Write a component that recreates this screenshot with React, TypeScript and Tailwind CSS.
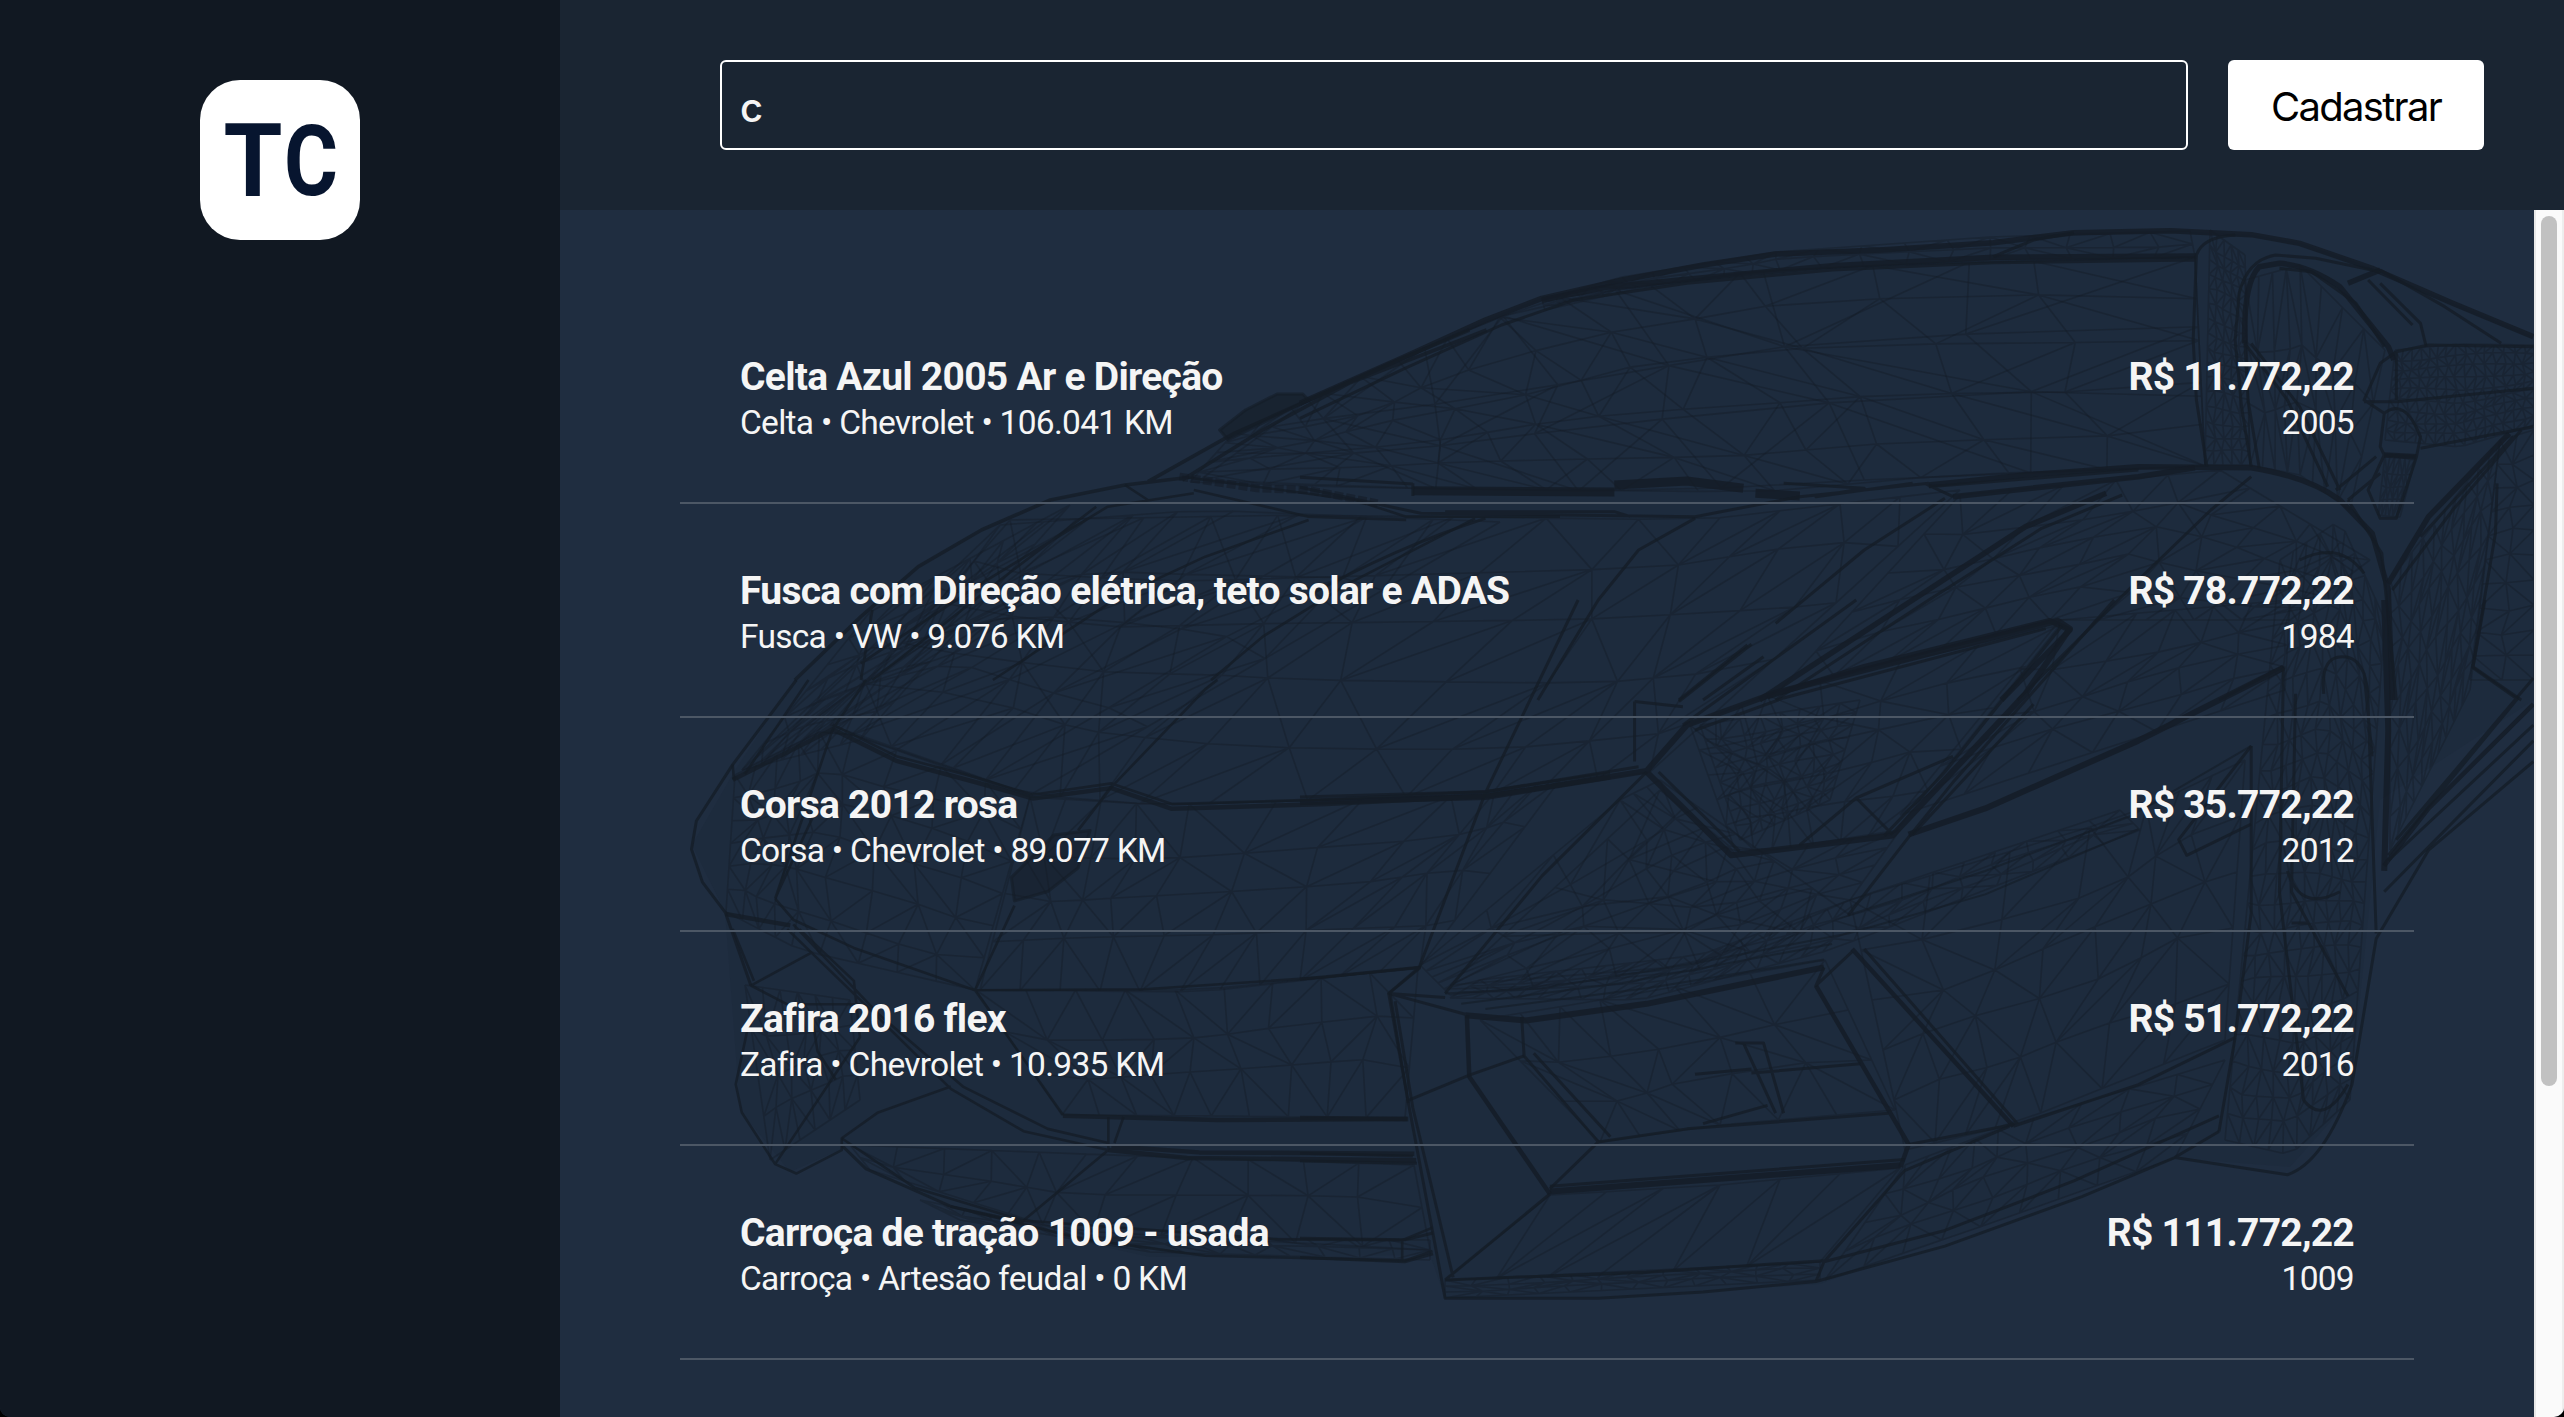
type Point = [number, number];

interface Car {
  title: string;
  model: string;
  brand: string;
  km: string;
  price: string;
  year: string;
}

const cars: Car[] = [
  { title: "Celta Azul 2005 Ar e Direção", model: "Celta", brand: "Chevrolet", km: "106.041", price: "R$ 11.772,22", year: "2005" },
  { title: "Fusca com Direção elétrica, teto solar e ADAS", model: "Fusca", brand: "VW", km: "9.076", price: "R$ 78.772,22", year: "1984" },
  { title: "Corsa 2012 rosa", model: "Corsa", brand: "Chevrolet", km: "89.077", price: "R$ 35.772,22", year: "2012" },
  { title: "Zafira 2016 flex", model: "Zafira", brand: "Chevrolet", km: "10.935", price: "R$ 51.772,22", year: "2016" },
  { title: "Carroça de tração 1009 - usada", model: "Carroça", brand: "Artesão feudal", km: "0", price: "R$ 111.772,22", year: "1009" },
];

// Point at fraction t of a polyline, with every segment taking an equal share of t.
function along(line: Point[], t: number): Point {
  const s = t * (line.length - 1);
  const i = Math.min(Math.floor(s), line.length - 2);
  const f = s - i;
  return [
    line[i][0] + (line[i + 1][0] - line[i][0]) * f,
    line[i][1] + (line[i + 1][1] - line[i][1]) * f,
  ];
}

// Triangulated surface stretched between an upper and a lower edge.
function mesh(top: Point[], bottom: Point[], cols: number, rows: number): string {
  const node = (c: number, r: number): string => {
    const a = along(top, c / cols);
    const b = along(bottom, c / cols);
    const inner = r > 0 && r < rows && c > 0 && c < cols ? 0.2 : 0;
    const k = r / rows + (inner * Math.sin(c * 12.9 + r * 7.3)) / rows;
    const shift = (inner * Math.cos(c * 5.1 + r * 3.7) * Math.abs(top[top.length - 1][0] - top[0][0])) / cols;
    return `${(a[0] + (b[0] - a[0]) * k + shift).toFixed(1)},${(a[1] + (b[1] - a[1]) * k).toFixed(1)}`;
  };
  let d = "";
  for (let r = 0; r <= rows; r++) {
    for (let c = 0; c <= cols; c++) {
      if (c < cols) d += `M${node(c, r)}L${node(c + 1, r)}`;
      if (r < rows) d += `M${node(c, r)}L${node(c, r + 1)}`;
      if (c < cols && r < rows) {
        d += (c * 3 + r * 5) % 4 < 2 ? `M${node(c, r)}L${node(c + 1, r + 1)}` : `M${node(c + 1, r)}L${node(c, r + 1)}`;
      }
    }
  }
  return d;
}

const surfaces: string[] = [
  // windshield and roof
  mesh([[1234, 433], [1308, 400], [1405, 356], [1542, 300], [1776, 268], [2195, 257]], [[1190, 482], [1380, 488], [1560, 490], [1760, 492], [1950, 475], [2205, 466]], 13, 5),
  mesh([[1308, 400], [1405, 356], [1542, 300], [1800, 266], [2195, 257]], [[1200, 480], [1400, 488], [1650, 492], [1900, 478], [2205, 466]], 7, 3),
  mesh([[1542, 300], [1622, 277], [1776, 252], [1990, 237], [2190, 231]], [[1545, 310], [1640, 288], [1780, 270], [1990, 260], [2195, 257]], 20, 2),
  // hood
  mesh([[1010, 520], [1300, 515], [1700, 520], [1960, 490]], [[830, 725], [1030, 795], [1160, 805], [1480, 795], [1650, 772]], 13, 5),
  mesh([[1000, 525], [1200, 510], [1500, 522]], [[742, 770], [830, 727], [1030, 795]], 9, 4),
  mesh([[870, 612], [1070, 505]], [[742, 770], [860, 740]], 6, 6),
  // nose
  mesh([[735, 775], [830, 727], [1030, 797]], [[726, 912], [800, 950], [975, 990]], 9, 6),
  mesh([[1030, 797], [1160, 805], [1480, 795], [1560, 780]], [[980, 990], [1200, 992], [1420, 967]], 11, 4),
  mesh([[976, 990], [1200, 990], [1418, 968]], [[1062, 1115], [1230, 1116], [1405, 1118]], 9, 3),
  mesh([[745, 985], [850, 1000]], [[770, 1160], [860, 1100]], 6, 4),
  mesh([[850, 1145], [1110, 1155], [1414, 1165]], [[870, 1170], [1060, 1230], [1430, 1250]], 11, 2),
  mesh([[920, 1200], [1100, 1237], [1430, 1240]], [[960, 1220], [1150, 1252], [1430, 1260]], 16, 2),
  // fender and front corner
  mesh([[1960, 495], [2220, 470], [2370, 560]], [[1780, 690], [2050, 620], [2290, 620]], 10, 5),
  mesh([[2060, 620], [2290, 600]], [[1900, 815], [2285, 690]], 6, 4),
  mesh([[1850, 900], [2130, 815], [2245, 760]], [[1905, 1150], [2010, 1125], [2225, 1040]], 7, 5),
  mesh([[1480, 980], [1700, 955], [1850, 900], [2120, 810]], [[1450, 998], [1640, 1000], [1830, 950], [2140, 830]], 26, 3),
  mesh([[1420, 965], [1620, 800], [1660, 780]], [[1450, 995], [1700, 970], [1850, 915]], 6, 5),
  mesh([[1660, 790], [1740, 855], [1900, 830]], [[1450, 985], [1700, 965], [1850, 900]], 7, 4),
  mesh([[1905, 1165], [2010, 1125], [2225, 1060]], [[1825, 1280], [2000, 1220], [2175, 1158]], 9, 4),
  // headlight
  mesh([[1690, 725], [1780, 690], [2060, 625]], [[1735, 850], [1800, 848], [1895, 832]], 7, 5),
  mesh([[1700, 725], [1860, 700]], [[1740, 840], [1830, 800]], 8, 8),
  // wheel arch, door and mirror
  mesh([[2280, 560], [2340, 520], [2385, 620]], [[2225, 1140], [2290, 1155], [2350, 1100]], 9, 22),
  mesh([[2210, 230], [2245, 255]], [[2205, 465], [2250, 465]], 5, 16),
  mesh([[2245, 280], [2300, 265], [2385, 350]], [[2250, 465], [2300, 475], [2350, 510]], 8, 3),
  mesh([[2395, 350], [2460, 344], [2534, 345]], [[2385, 440], [2460, 447], [2534, 425]], 15, 9),
  mesh([[2385, 455], [2415, 460]], [[2378, 515], [2400, 517]], 6, 4),
  mesh([[2390, 580], [2500, 440]], [[2390, 850], [2470, 690]], 10, 8),
  mesh([[2500, 440], [2534, 430]], [[2470, 680], [2534, 680]], 2, 10),
  // lower intakes
  mesh([[1480, 1020], [1600, 1000], [1825, 960]], [[1600, 1142], [1720, 1125], [1895, 1110]], 6, 3),
  mesh([[1550, 1195], [1720, 1185], [1900, 1168]], [[1445, 1280], [1600, 1275], [1820, 1262]], 6, 1),
  mesh([[1445, 1280], [1820, 1262]], [[1445, 1298], [1820, 1280]], 12, 3),
];

function CarWireframe() {
  return (
    <svg
      viewBox="560 210 1974 1207"
      className="pointer-events-none absolute inset-0 h-full w-full"
      fill="none"
      stroke="#141c26"
      strokeLinejoin="round"
      aria-hidden="true"
    >
      <path
        d="M735,770L795,680L861,616L918,566L981,530L1050,500L1148,482L1234,433L1308,400L1405,356L1485,320L1542,298L1622,278L1776,252L1993,243L2074,233L2170,231L2251,235L2300,243L2372,268L2452,303L2534,337V700L2380,800L2350,1100L2290,1167L2175,1158L1820,1284L1600,1298H1445L1430,1255L1150,1257L960,1215L850,1145L790,1172L740,1110L725,912L692,845Z"
        fill="#141c26"
        fillOpacity="0.1"
        stroke="none"
      />
      <g strokeWidth="1.6" strokeOpacity="0.4">
        {surfaces.map((d, i) => (
          <path key={i} d={d} />
        ))}
      </g>

      {/* Cabin, side window, mirror and upper hood */}
      <g transform="translate(1300 200) scale(0.80612 0.33333)">
        <g strokeWidth="5.5" strokeOpacity="0.8">
          <path vectorEffect="non-scaling-stroke" d="M0,610L60,545L130,470L230,360L300,295L400,240L500,195L590,162L720,150L860,128L960,98L1080,92L1180,104L1240,130L1330,205L1430,310L1530,410" />
          <path vectorEffect="non-scaling-stroke" d="M300,300L380,262L480,238L660,197L860,172L1112,168M570,1500L760,1200L900,980L1000,880M780,855L900,825L1040,800L1180,803Q1250,830 1290,900L1330,1000L1350,1170L1355,1500" />
          <path vectorEffect="non-scaling-stroke" d="M1172,430Q1170,250 1190,200L1215,190Q1250,195 1290,260L1350,440L1357,480M1500,700L1400,950L1350,1150M810,890L1040,830L1110,803M1345,765L1385,770M580,1490L700,1400L930,1262L955,1290L870,1500M1340,210L1300,250" />
          <path vectorEffect="non-scaling-stroke" strokeWidth="9" d="M140,872L390,876M390,855L480,843L550,865M565,880L620,888" />
        </g>
        <g strokeWidth="3" strokeOpacity="0.75">
          <path vectorEffect="non-scaling-stroke" d="M0,655L130,505L250,375L340,300L480,250L660,210L860,188L1110,180M1112,165L1108,420L1112,600L1125,800M1112,165Q1120,110 1160,105M1180,800L1168,620L1160,420L1165,280Q1175,180 1210,165L1260,175L1340,215M1190,805L1176,600L1172,420M1215,205L1255,215L1310,310L1345,440M1340,250L1390,370L1397,440M1325,240L1380,375M1340,210L1420,320L1490,430" />
          <path vectorEffect="non-scaling-stroke" d="M1360,455L1400,435L1530,440M1360,455L1340,490L1320,600L1345,640M1320,605L1360,605L1530,565M1360,460V600M1340,740L1345,640Q1370,590 1390,710L1385,770L1345,765ZM1390,745L1530,680M1345,765L1325,870L1340,955H1360L1385,770M1335,770L1285,870M1340,820L1300,900M1180,430L1240,620L1290,870M1172,430L1225,600L1275,860" />
          <path vectorEffect="non-scaling-stroke" d="M1515,690L1430,930L1355,1170M1505,710L1390,1010M1485,850L1483,1000L1455,1400L1515,1500M1300,900L1342,1060L1360,1500M860,170L910,120L960,98M0,832L140,852M0,862L150,940L490,950L620,890L780,850M180,935H390L410,950M140,850V888M600,850L700,865L640,890L760,850M775,850L810,890M780,860L1040,810" />
          <path vectorEffect="non-scaling-stroke" d="M230,955Q120,1040 0,1200M490,955L420,1050L370,1200L295,1500M800,895L700,1050L590,1270M590,1500L780,1200L920,985L1020,885M1180,830L1130,930L1040,1140L890,1500M555,1335L470,1500M575,1370L500,1500M1140,1500L1220,1400M1240,1080Q1290,1020 1320,1120" />
        </g>
      </g>

      {/* Headlight, right bumper and lower intake */}
      <g transform="translate(1300 600) scale(0.80612 0.52105)">
        <g strokeWidth="6" strokeOpacity="0.8">
          <path vectorEffect="non-scaling-stroke" d="M0,388L230,378L430,328L480,240L590,178L940,40L955,55L900,180L735,452L620,474L535,490L430,330M755,450L850,400L1040,270L1220,130M1345,0L1350,250L1345,520M205,797L280,807L430,775L650,705M310,1135L745,1085" />
          <path vectorEffect="non-scaling-stroke" strokeWidth="4.5" d="M207,797L210,915L310,1140M640,740L755,1045L745,1088M685,670L885,1010M0,994L133,996M1530,200L1400,400L1345,510" />
        </g>
        <g strokeWidth="3" strokeOpacity="0.75">
          <path vectorEffect="non-scaling-stroke" d="M0,378L230,368L420,320M445,330L545,482M945,50L800,330L725,452M925,55L600,188L490,250M910,200L760,450M620,470L690,380L810,300M690,380L735,450M345,0L230,370L148,705M690,0L475,240M560,85L470,195M415,195L475,205M415,195V310M430,330L300,530L180,755" />
          <path vectorEffect="non-scaling-stroke" d="M1010,0L810,350L755,455L680,605M1180,280L1090,460L1100,490L1180,430M0,728L148,705L110,755L180,763M110,755L205,795M275,800L278,875L370,1040L480,1015L730,985M290,870L385,1030M370,1040L310,1130M650,705L640,740L685,675M700,670L890,1005L755,1045M885,1010L1040,930L1160,840" />
          <path vectorEffect="non-scaling-stroke" strokeWidth="2" strokeOpacity="0.6" d="M680,605L850,520L1030,415L1180,280M180,755L300,745L480,700L680,640L850,565L1040,440M200,775L400,735L660,660M230,785L430,745L650,690" />
          <path vectorEffect="non-scaling-stroke" d="M310,1140L180,1305M310,1125L750,1074M110,755L135,970L180,1340H370L500,1328L640,1308L650,1270L750,1095L880,1010M118,770L140,975L190,1300M180,1305L430,1290L650,1268M640,1308L800,1240L970,1145L1085,1070L1140,1020M650,1270L800,1210L960,1115L1140,990M1085,1070L1225,1103Q1270,1080 1305,930L1335,650L1400,480L1530,310" />
          <path vectorEffect="non-scaling-stroke" d="M135,960L210,912L278,875M540,850H575L600,985M550,850L590,985M560,908L695,890M490,910L560,900M500,1005L580,970M0,1062L140,1067M0,1076L145,1081M0,1225L130,1228L165,1215M0,1262L130,1270L165,1255M1160,840L1180,600V280M1140,1020L1160,840" />
          <path vectorEffect="non-scaling-stroke" d="M1220,130L1215,560L1245,960Q1270,1010 1300,930M1235,180L1230,560L1300,760M1270,180Q1265,100 1300,110Q1325,120 1325,200L1335,640M1225,520Q1240,600 1290,560M1230,620H1250M1320,140L1330,300M1470,0L1455,130L1510,190L1350,490M1530,150L1360,460M1530,240L1350,500M1530,270L1345,560" />
        </g>
      </g>

      {/* Nose, emblem and left bumper */}
      <g transform="translate(660 680) scale(0.60587 0.47003)">
        <g strokeWidth="4.5" strokeOpacity="0.75">
          <path vectorEffect="non-scaling-stroke" d="M120,212L285,105L390,172L520,217L615,252L745,230L845,274L1100,264L1365,247L1568,207M665,927L920,936L1235,934M108,498L215,522M740,1000L870,1017L1248,1022M745,992L890,1005L1245,1008" />
          <path vectorEffect="non-scaling-stroke" strokeWidth="3" d="M225,0L120,180L60,300L52,360L70,430L108,495L150,650M300,990L340,1040L480,1120L600,1155" />
        </g>
        <g strokeWidth="2.6" strokeOpacity="0.75">
          <path vectorEffect="non-scaling-stroke" d="M285,95L390,162L520,207L615,244L745,220L845,264L1100,254L1365,237L1568,197M120,180L122,212M340,0L285,105M745,228L900,20L920,0M190,465L220,510L320,570L520,660L800,658L1100,632L1255,612M520,660L585,480M690,320L745,228M520,660L665,925M1255,612L1205,665L1235,900" />
          <path vectorEffect="non-scaling-stroke" d="M145,740L125,860L135,920L190,1030L225,1050L300,1000V975L360,920L480,865M150,650L210,690L330,690M150,650L250,580M120,530L155,640M210,530L330,680L480,870L600,960L740,1000M220,520L360,710L500,865L640,955L740,985M740,1000V930M765,930L750,985M740,1000L600,1150M190,1030L330,760L320,640L230,530" />
          <path vectorEffect="non-scaling-stroke" d="M480,1120L700,1190L900,1225L1230,1235L1275,1215M300,975L420,1080L600,1150L1020,1190L1225,1192L1275,1165M1225,1192V1235M245,0L140,200M250,710L260,790L290,850M190,465L260,270M285,105L190,465" />
        </g>
        <path vectorEffect="non-scaling-stroke" d="M585,470L580,420L650,330L710,320L690,400L640,450Z" fill="#141c26" fillOpacity="0.4" strokeWidth="3" strokeOpacity="0.6" />
      </g>

      {/* Left edge of the hood, windshield pillar and far mirror */}
      <g transform="translate(660 330) scale(0.57398 0.33333)">
        <g strokeWidth="3.6" strokeOpacity="0.75">
          <path vectorEffect="non-scaling-stroke" d="M235,1050L350,860L450,710L560,600L680,510L810,465L930,440M850,455L1000,310L1130,210L1280,95L1410,0M910,450L1050,300L1200,160L1440,0" />
          <path vectorEffect="non-scaling-stroke" strokeWidth="2.6" d="M760,530L600,740L370,1050M930,490L780,530L560,760L350,1000M370,840L350,1050M1420,565L1200,760L1050,920L960,1050M1130,570L950,680L800,800L580,1050M810,465L850,510M910,440L1040,470L1210,510L1300,560H1568M930,480L1130,560L1300,570" />
          <path vectorEffect="non-scaling-stroke" strokeWidth="8" strokeOpacity="0.55" strokeDasharray="9 3" d="M905,440L1040,475L1130,480L1250,520" />
        </g>
        <path vectorEffect="non-scaling-stroke" d="M1130,210L1120,192H1075L1020,240L975,300L990,330Z" fill="#141c26" fillOpacity="0.6" strokeWidth="3" strokeOpacity="0.6" />
      </g>
    </svg>
  );
}

function Logo() {
  return (
    <svg viewBox="0 0 160 160" className="size-40 rounded-[40px] bg-white" role="img" aria-label="TC">
      <g fill="#07152f" fontFamily="Roboto" fontWeight="700">
        <text x="23.500" y="115.500" fontSize="102" textLength="59" lengthAdjust="spacingAndGlyphs">T</text>
        <text x="84" y="114.800" fontSize="99" textLength="54" lengthAdjust="spacingAndGlyphs">C</text>
      </g>
    </svg>
  );
}

function CarRow({ car }: { car: Car }) {
  return (
    <li className="flex h-[214px] items-start justify-between border-b-2 border-[#4c5765] px-[60px] pt-[63px] text-[#f5f5f5]">
      <div>
        <h2 className="text-[39px] leading-[48px] font-bold tracking-[-0.72px] whitespace-nowrap">{car.title}</h2>
        <p className="text-[33.5px] leading-[44px] tracking-[-0.71px] whitespace-nowrap">
          {car.model} • {car.brand} • {car.km} KM
        </p>
      </div>
      <div className="text-right">
        <p className="text-[39px] leading-[48px] font-bold tracking-[-0.75px] whitespace-nowrap">{car.price}</p>
        <p className="text-[33.5px] leading-[44px] tracking-[-0.71px]">{car.year}</p>
      </div>
    </li>
  );
}

export default function App() {
  return (
    <div className="h-[1417px] w-[2564px] overflow-hidden bg-black font-['Roboto',sans-serif]">
      <div className="flex h-full overflow-hidden rounded-b-[10px] bg-[#1f2d40]">
        <aside className="flex w-[560px] shrink-0 justify-center bg-[#111822] pt-20">
          <Logo />
        </aside>
        <div className="flex min-w-0 flex-1 flex-col">
          <header className="flex h-[210px] shrink-0 gap-10 bg-[#1a2532] pt-[60px] pr-20 pl-40">
            <input
              defaultValue="c"
              className="h-[90px] min-w-0 flex-1 rounded-[6px] border-2 border-white bg-transparent pt-1 pr-[18px] pl-[18px] font-['Inter',sans-serif] text-[40px] font-medium text-[#f5f5f5] outline-none"
            />
            <button className="h-[90px] w-64 rounded-[6px] bg-white pt-[3px] font-['Inter',sans-serif] text-[40px] tracking-[-1.7px] text-black">
              Cadastrar
            </button>
          </header>
          <div className="flex min-h-0 flex-1">
            <main className="relative flex-1 overflow-hidden px-[120px] pt-20">
              <CarWireframe />
              <ul className="relative">
                {cars.map((car) => (
                  <CarRow key={car.title} car={car} />
                ))}
              </ul>
            </main>
            <div className="flex w-[30px] justify-center border-r-2 border-l-2 border-r-[#ededed] border-l-[#e8e8e8] bg-[#fafafa] pt-1.5">
              <div className="h-[870px] w-4 rounded-full bg-[#c1c1c1]" />
            </div>
          </div>
        </div>
      </div>
    </div>
  );
}
